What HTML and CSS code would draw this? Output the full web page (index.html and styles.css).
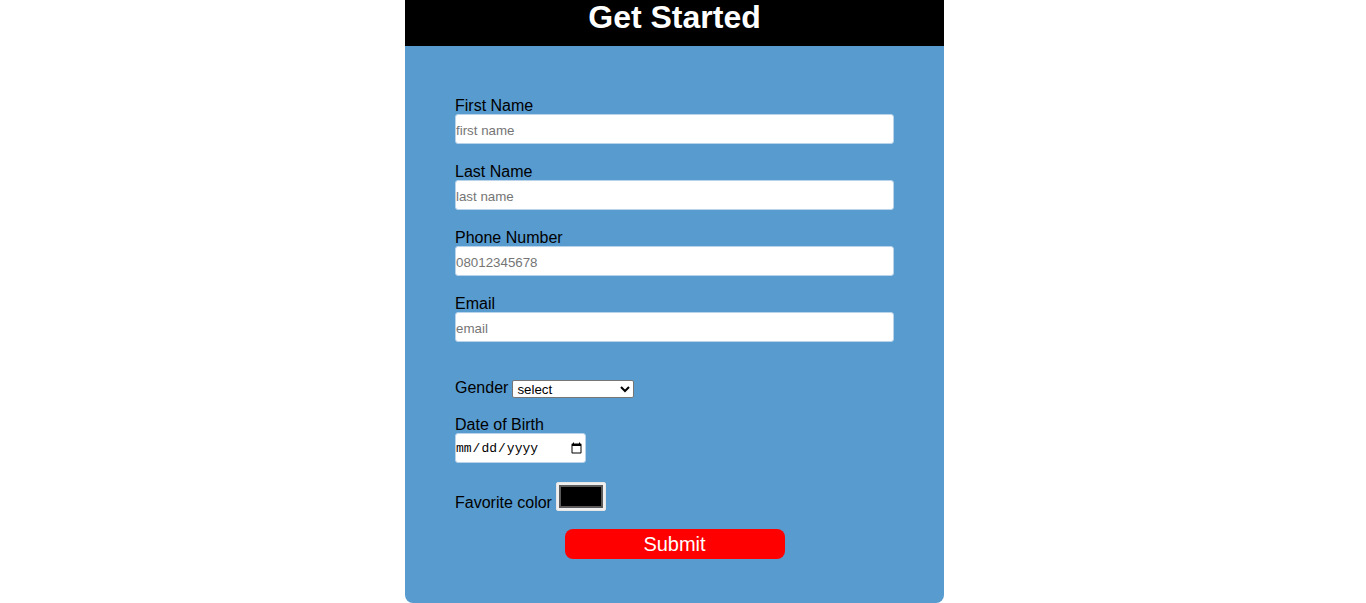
FILE: index.html
```html
<!DOCTYPE html>
<html lang="en">
<head>
<meta charset="utf-8">
<title>Get Started</title>
<link rel="stylesheet" href="styles.css">
</head>
<body>
<div class="page">
  <div class="card">
    <h1 class="title">Get Started</h1>
    <form class="form">
      <div class="field">
        <label for="fn">First Name</label>
        <input id="fn" class="text" type="text" placeholder="first name">
      </div>
      <div class="field">
        <label for="ln">Last Name</label>
        <input id="ln" class="text" type="text" placeholder="last name">
      </div>
      <div class="field">
        <label for="ph">Phone Number</label>
        <input id="ph" class="text" type="tel" placeholder="08012345678">
      </div>
      <div class="field field-last">
        <label for="em">Email</label>
        <input id="em" class="text" type="email" placeholder="email">
      </div>
      <div class="row gender-row">
        <label for="gd">Gender</label>
        <select id="gd" class="select">
          <option>select</option>
          <option>male</option>
          <option>female</option>
        </select>
      </div>
      <div class="field dob">
        <label for="dob">Date of Birth</label>
        <input id="dob" class="date" type="date">
      </div>
      <div class="row color-row">
        <label for="fc">Favorite color</label>
        <input id="fc" class="color" type="color" value="#000000">
      </div>
      <button type="submit" class="submit">Submit</button>
    </form>
  </div>
</div>
</body>
</html>
```

FILE: styles.css
```css
html, body {
  margin: 0;
  padding: 0;
  background: #ffffff;
}

.page {
  padding-right: 17px;
  font-family: "Liberation Sans", Arial, sans-serif;
}

.card {
  width: 539px;
  margin: 0 auto;
  background: #589bcf;
  border-radius: 0 0 8px 8px;
}

.title {
  margin: 0;
  height: 46px;
  background: #000000;
  color: #ffffff;
  font-size: 32px;
  font-weight: bold;
  line-height: 34px;
  text-align: center;
}

.form {
  display: flex;
  flex-direction: column;
  padding: 50px 50px 44px;
}

.field {
  display: flex;
  flex-direction: column;
  margin-bottom: 18px;
}

.field-last {
  margin-bottom: 36px;
}

label {
  font-size: 16px;
  line-height: 16px;
  padding-top: 2px;
  color: #000000;
}

.text {
  box-sizing: border-box;
  width: 439px;
  height: 30px;
  margin: 0;
  padding: 2px 0 0 0;
  border: 1px solid #b8d3ea;
  border-radius: 3px;
  background: #ffffff;
  font-family: "Liberation Sans", Arial, sans-serif;
  font-size: 13.333px;
  color: #000;
}

.text::placeholder {
  color: #757575;
}

.row {
  display: flex;
  gap: 4px;
}

.gender-row {
  align-items: center;
  height: 20px;
  margin-bottom: 17px;
}

.gender-row label {
  padding-top: 0;
}

.select {
  box-sizing: border-box;
  width: 122px;
  height: 18px;
  margin: 1px 0 0;
  padding: 0;
  border: 1px solid #767676;
  border-radius: 2px;
  background: #ffffff;
  font-family: "Liberation Sans", Arial, sans-serif;
  font-size: 13.333px;
  color: #000;
}

.dob {
  margin-bottom: 19px;
}

.date {
  box-sizing: border-box;
  width: 131px;
  height: 30px;
  margin: 0;
  padding: 1px 0 0 0;
  border: 1px solid #b8d3ea;
  border-radius: 3px;
  background: #ffffff;
  font-family: "Liberation Mono", "DejaVu Sans Mono", monospace;
  font-size: 13px;
  color: #000;
}

.date::-webkit-datetime-edit {
  padding: 0;
  margin-left: -1px;
}

.color-row {
  align-items: flex-end;
  gap: 4px;
  margin-bottom: 18px;
}

.color {
  box-sizing: border-box;
  width: 50px;
  height: 29px;
  margin: 0;
  padding: 2px 2px;
  border: 1px solid #e6e6e6;
  border-radius: 2px;
  background: #efefef;
}

.color::-webkit-color-swatch-wrapper {
  padding: 0;
}

.color::-webkit-color-swatch {
  border: 2px solid #5a5a5a;
  border-radius: 0;
}

.submit {
  align-self: center;
  width: 220px;
  height: 30px;
  padding: 0;
  border: none;
  border-radius: 8px;
  background: #ff0000;
  color: #ffffff;
  font-family: "Liberation Sans", Arial, sans-serif;
  font-size: 20px;
  cursor: pointer;
}
```
